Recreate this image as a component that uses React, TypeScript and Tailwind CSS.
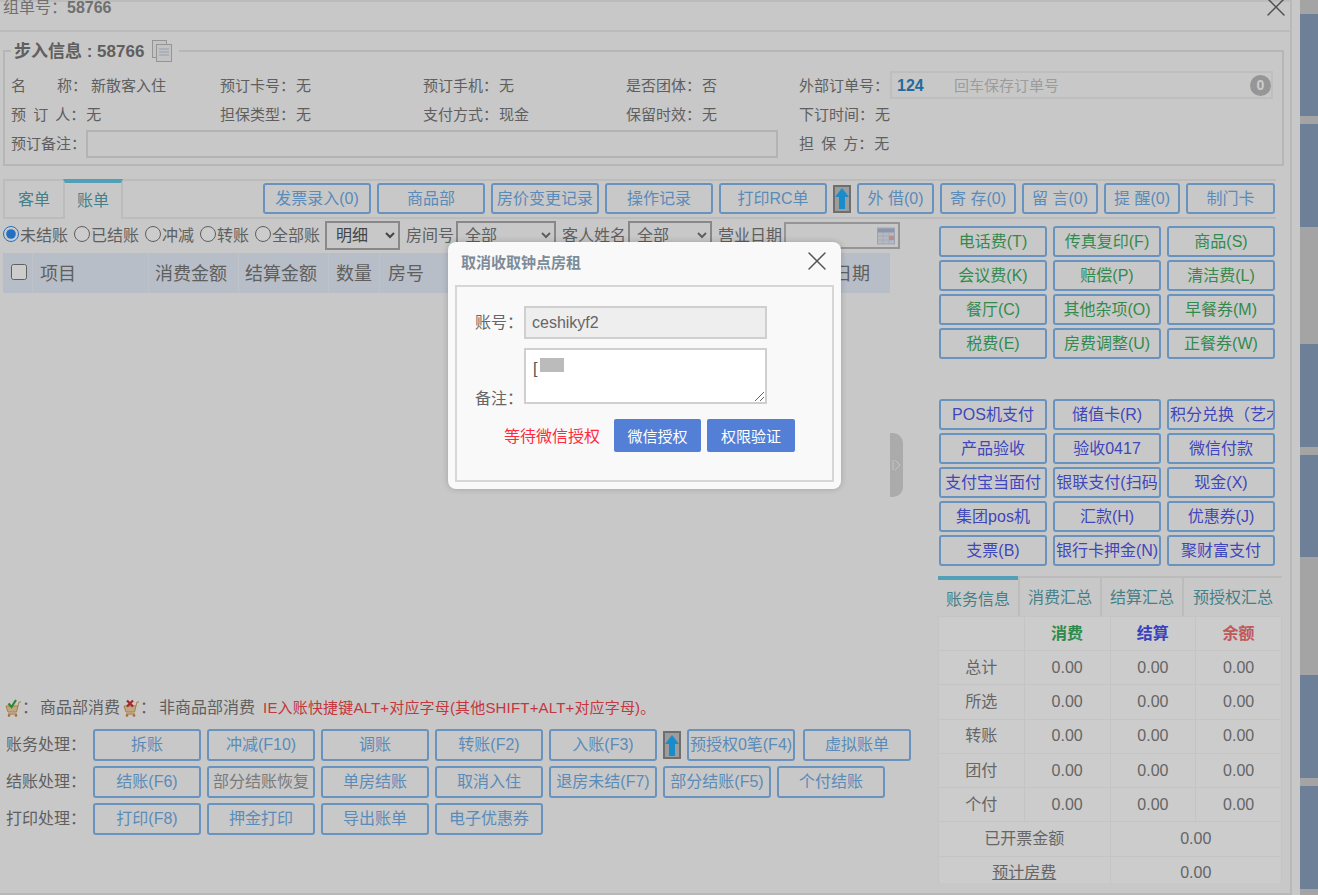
import { X } from "lucide-react";

const topBtns = [
  { t: "发票录入(0)", w: "w-[108px]" },
  { t: "商品部", w: "w-[108px]" },
  { t: "房价变更记录", w: "w-[108px]" },
  { t: "操作记录", w: "w-[108px]" },
  { t: "打印RC单", w: "w-[108px]" },
];
const topBtns2 = [
  { t: "外 借(0)", w: "w-[77px]" },
  { t: "寄 存(0)", w: "w-[76px]" },
  { t: "留 言(0)", w: "w-[76px]" },
  { t: "提 醒(0)", w: "w-[76px]" },
  { t: "制门卡", w: "w-[89px]" },
];
const greenBtns = ["电话费(T)", "传真复印(F)", "商品(S)", "会议费(K)", "赔偿(P)", "清洁费(L)", "餐厅(C)", "其他杂项(O)", "早餐券(M)", "税费(E)", "房费调整(U)", "正餐券(W)"];
const payBtns = ["POS机支付", "储值卡(R)", "积分兑换（艺术", "产品验收", "验收0417", "微信付款", "支付宝当面付", "银联支付(扫码", "现金(X)", "集团pos机", "汇款(H)", "优惠券(J)", "支票(B)", "银行卡押金(N)", "聚财富支付"];
const summary = ["总计", "所选", "转账", "团付", "个付"];

function Btn({ label, className, start }: { label: string; className?: string; start?: boolean }) {
  return (
    <button
      type="button"
      className={`flex shrink-0 items-center overflow-hidden whitespace-nowrap rounded-[3px] border-2 border-[#82b8ee] bg-[#fbfbfb] text-base ${start ? "justify-start pl-[1px]" : "justify-center"} ${className ?? ""}`}
    >
      {label}
    </button>
  );
}

function ArrowUp() {
  return (
    <span className="flex h-[28px] w-[18px] shrink-0 items-center justify-center self-center border-2 border-[#8a8a8a] bg-[#c4c4c4]">
      <svg width="14" height="23" viewBox="0 0 14 23">
        <path d="M7 1 L14 10 L10 10 L10 22 L4 22 L4 10 L0 10 Z" fill="#20b0ff" />
      </svg>
    </span>
  );
}

function Cart({ ok }: { ok: boolean }) {
  return (
    <svg width="17" height="18" viewBox="0 0 17 18" className="shrink-0">
      <path d="M1 7 H13 L11.5 13 H3 Z" fill="#f2d3a4" stroke="#d89d50" strokeWidth="1" />
      <path d="M3 15 H12" stroke="#d89d50" strokeWidth="1.2" />
      <circle cx="4" cy="16.5" r="1.3" fill="#c88a3c" />
      <circle cx="11" cy="16.5" r="1.3" fill="#c88a3c" />
      <path d="M13 7 L14 3 H16" stroke="#d89d50" strokeWidth="1" fill="none" />
      {ok ? (
        <path d="M3.5 4.5 L6.5 8 L11 1" stroke="#3aa845" strokeWidth="2.2" fill="none" />
      ) : (
        <path d="M4 1.5 L10 7.5 M10 1.5 L4 7.5" stroke="#c8323c" strokeWidth="2.2" fill="none" />
      )}
    </svg>
  );
}

function Info({ label, value }: { label: string; value: string }) {
  return (
    <div className="flex h-[29px] items-center whitespace-pre">
      <span className="[word-spacing:3px]">{label}</span>：<span className="ml-px">{value}</span>
    </div>
  );
}

function Radio({ label, checked }: { label: string; checked?: boolean }) {
  return (
    <label className="mr-[6px] flex items-center text-base">
      <input type="radio" name="acct" defaultChecked={checked} className="mb-[3px] h-4 w-4 accent-[#2d8cf0]" />
      <span className="ml-px">{label}</span>
    </label>
  );
}

export default function App() {
  return (
    <div className="relative flex h-[895px] w-[1318px] overflow-hidden bg-[#fbfbfb] text-[15px] text-[#777] [font-family:'Liberation_Sans','Noto_Sans_CJK_SC',sans-serif]">
      <div className="flex w-[1292px] shrink-0 flex-col border-r-2 border-b-2 border-r-[#e8e8e8] border-b-[#e8e8e8]">
        <header className="relative h-[32px] shrink-0 border-t-2 border-b-2 border-[#ececec] pl-[3px]">
          <div className="-mt-[3px] text-base leading-[18px] text-[#8c8c8c]">
            组单号：<span className="font-bold">58766</span>
          </div>
          <X className="absolute -right-[2px] -top-[11px] h-[32px] w-[32px] text-[#666]" strokeWidth={1.1} />
        </header>

        <fieldset className="ml-[3px] mr-[6px] mt-[7px] border-2 border-[#e4e4e4] pb-[5px] pl-[6px] pr-[9px]">
          <legend className="-mt-[1px] flex h-[24px] items-center pl-[3px] pr-[4px] text-[17px] font-bold leading-none">
            步入信息 : 58766
            <svg width="24" height="24" viewBox="0 0 24 24" className="ml-[7px]" fill="#f4f4f4" stroke="#bbb">
              <rect x="1.5" y="1.5" width="14" height="17" />
              <rect x="5.5" y="5.5" width="15" height="17" />
              <path d="M8 10 H18 M8 13 H18 M8 16 H18" stroke="#bcc4d8" />
            </svg>
          </legend>
          <div className="mt-[9px] grid grid-cols-[209px_203px_203px_173px_1fr]">
            <div className="flex h-[29px] items-center whitespace-pre">
              <span className="w-[46px]">名</span>称：<span className="ml-[4px]">新散客入住</span>
            </div>
            <Info label="预订卡号" value="无" />
            <Info label="预订手机" value="无" />
            <Info label="是否团体" value="否" />
            <div className="flex h-[29px] items-center whitespace-pre">
              外部订单号：
              <div className="-mt-[3px] ml-[1px] flex h-[28px] flex-1 items-center border-2 border-[#eeeeee] bg-[#fbfbfb] pl-[5px]">
                <span className="w-[57px] pt-[2px] text-base font-bold text-[#2c86c6]">124</span>
                <span className="pt-[2px] text-[#c4c4c4]">回车保存订单号</span>
                <span className="ml-auto flex h-[21px] w-[21px] items-center justify-center rounded-full bg-[#bcbcbc] text-sm font-bold text-white">0</span>
              </div>
            </div>
            <Info label="预 订 人" value="无" />
            <Info label="担保类型" value="无" />
            <Info label="支付方式" value="现金" />
            <Info label="保留时效" value="无" />
            <Info label="下订时间" value="无" />
            <div className="col-span-4 flex h-[29px] items-center whitespace-pre">
              预订备注：
              <input className="-mt-[2px] h-[28px] w-[692px] border-2 border-[#e0e0e0] bg-[#fbfbfb]" />
            </div>
            <Info label="担 保 方" value="无" />
          </div>
        </fieldset>

        <div className="ml-[3px] mr-[14px] mt-[13px] flex h-[40px] shrink-0 items-start border-y-2 border-[#ececec]">
          <div className="flex h-[38px] w-[60px] items-center justify-center border-l-2 border-[#ececec] text-base text-[#56a0aa]">客单</div>
          <div className="-mt-[2px] flex h-[40px] w-[60px] items-center justify-center border-x-2 border-t-4 border-x-[#ececec] border-t-[#66c8e6] bg-[#fbfbfb] text-base text-[#56a0aa]">账单</div>
          <div className="ml-[140px] mt-[2px] flex gap-[6px] text-[#72aee8]">
            {topBtns.map((b) => (
              <Btn key={b.t} label={b.t} className={`h-[31px] ${b.w}`} />
            ))}
            <ArrowUp />
            {topBtns2.map((b) => (
              <Btn key={b.t} label={b.t} className={`h-[31px] ${b.w}`} />
            ))}
          </div>
        </div>

        <div className="flex min-h-0 flex-1">
          <div className="flex w-[939px] shrink-0 flex-col pl-[3px]">
            <div className="mt-[2px] flex h-[29px] items-center text-base">
              <Radio label="未结账" checked />
              <Radio label="已结账" />
              <Radio label="冲减" />
              <Radio label="转账" />
              <Radio label="全部账" />
              <select className="-ml-[1px] h-[29px] w-[75px] border-2 border-[#aaa] bg-[#fbfbfb] pl-[5px] text-base text-[#555]">
                <option>明细</option>
              </select>
              <span className="ml-[6px] w-[50px] overflow-hidden whitespace-nowrap">房间号</span>
              <select className="h-[29px] w-[100px] border-2 border-[#aaa] bg-[#fbfbfb] pl-[3px] text-base">
                <option>全部</option>
              </select>
              <span className="ml-[6px] w-[66px] overflow-hidden whitespace-nowrap">客人姓名</span>
              <select className="h-[29px] w-[84px] border-2 border-[#aaa] bg-[#fbfbfb] pl-[3px] text-base">
                <option>全部</option>
              </select>
              <span className="ml-[6px] w-[66px] overflow-hidden whitespace-nowrap">营业日期</span>
              <div className="flex h-[27px] w-[116px] items-center justify-end border-2 border-[#bbb] pr-[3px]">
                <svg width="18" height="18" viewBox="0 0 18 18">
                  <rect x="0.5" y="1" width="17" height="16" fill="#e4e8f2" stroke="#c4cde0" />
                  <rect x="1" y="1.5" width="16" height="4" fill="#aebcd8" />
                  <path d="M1 9 H17 M1 13 H17 M6 6 V17 M12 6 V17" stroke="#d0d6e6" />
                  <rect x="12" y="9" width="5" height="4" fill="#eeb0a0" />
                </svg>
              </div>
            </div>
            <div className="mt-[3px] flex h-[40px] w-[887px] items-center bg-[#e7eefa] text-[18px] text-[#777]">
              <div className="flex h-full w-[30px] items-center justify-center border-r border-[#eef3fc] pl-[2px]">
                <input type="checkbox" className="mb-[3px] h-[16px] w-[16px]" />
              </div>
              <div className="flex h-full w-[116px] items-center border-r border-[#eef3fc] pl-[7px] pt-[2px]">项目</div>
              <div className="flex h-full w-[90px] items-center border-r border-[#eef3fc] pl-[6px] pt-[2px]">消费金额</div>
              <div className="flex h-full w-[90px] items-center border-r border-[#eef3fc] pl-[6px] pt-[2px]">结算金额</div>
              <div className="flex h-full w-[51px] items-center justify-center border-r border-[#eef3fc] pt-[2px]">数量</div>
              <div className="flex h-full items-center pl-[8px] pt-[2px]">房号</div>
              <div className="ml-auto pr-[20px] pt-[2px]">日期</div>
            </div>

            <div className="mt-auto flex h-[20px] items-center whitespace-nowrap text-base">
              <span className="ml-[2px]"><Cart ok /></span>
              <span>：</span>
              <span className="ml-[2px]">商品部消费</span>
              <span className="ml-[3px]"><Cart ok={false} /></span>
              <span>：</span>
              <span className="ml-[3px]">非商品部消费</span>
              <span className="ml-[8px] text-[15px] tracking-[0.17px] text-[#f5454f]">IE入账快捷键ALT+对应字母(其他SHIFT+ALT+对应字母)。</span>
            </div>
            <div className="mb-[58px] mt-[11px] flex flex-col gap-[5px] text-[#72aee8]">
              <div className="flex h-[32px] items-center gap-[6px]">
                <span className="ml-[3px] w-[81px] text-base text-[#777]">账务处理：</span>
                <Btn label="拆账" className="h-[32px] w-[108px]" />
                <Btn label="冲减(F10)" className="h-[32px] w-[108px]" />
                <Btn label="调账" className="h-[32px] w-[108px]" />
                <Btn label="转账(F2)" className="h-[32px] w-[108px]" />
                <Btn label="入账(F3)" className="h-[32px] w-[108px]" />
                <ArrowUp />
                <Btn label="预授权0笔(F4)" className="h-[32px] w-[108px]" />
                <Btn label="虚拟账单" className="ml-[2px] h-[32px] w-[108px]" />
              </div>
              <div className="flex h-[32px] items-center gap-[6px]">
                <span className="ml-[3px] w-[81px] text-base text-[#777]">结账处理：</span>
                <Btn label="结账(F6)" className="h-[32px] w-[108px]" />
                <Btn label="部分结账恢复" className="h-[32px] w-[108px] text-[#999]" />
                <Btn label="单房结账" className="h-[32px] w-[108px]" />
                <Btn label="取消入住" className="h-[32px] w-[108px]" />
                <Btn label="退房未结(F7)" className="h-[32px] w-[108px]" />
                <Btn label="部分结账(F5)" className="h-[32px] w-[108px]" />
                <Btn label="个付结账" className="h-[32px] w-[108px]" />
              </div>
              <div className="flex h-[32px] items-center gap-[6px]">
                <span className="ml-[3px] w-[81px] text-base text-[#777]">打印处理：</span>
                <Btn label="打印(F8)" className="h-[32px] w-[108px]" />
                <Btn label="押金打印" className="h-[32px] w-[108px]" />
                <Btn label="导出账单" className="h-[32px] w-[108px]" />
                <Btn label="电子优惠券" className="h-[32px] w-[108px]" />
              </div>
            </div>
          </div>

          <div className="flex min-w-0 flex-1 flex-col">
            <div className="mt-[7px] grid grid-cols-[108px_108px_108px] gap-x-[6px] gap-y-[3px] text-[#3fae60]">
              {greenBtns.map((t) => (
                <Btn key={t} label={t} className="h-[31px] w-[108px]" />
              ))}
            </div>
            <div className="mt-[40px] grid grid-cols-[108px_108px_108px] gap-x-[6px] gap-y-[3px] text-[#5058ec]">
              {payBtns.map((t) => (
                <Btn key={t} label={t} start={t.startsWith("积分")} className="h-[31px] w-[108px]" />
              ))}
            </div>
            <div className="-ml-px mt-[10px] flex h-[40px] w-[344px] border-t-2 border-[#ececec] text-base text-[#56a0aa]">
              <div className="-mt-[2px] flex h-[40px] w-[80px] items-center justify-center border-t-4 border-[#66c8e6] pt-[4px]">账务信息</div>
              <div className="flex h-[38px] w-[82px] items-center justify-center border-l-2 border-[#ececec] pt-[2px]">消费汇总</div>
              <div className="flex h-[38px] w-[82px] items-center justify-center border-l-2 border-[#ececec] pt-[2px]">结算汇总</div>
              <div className="flex h-[38px] flex-1 items-center justify-center whitespace-nowrap border-l-2 border-[#ececec] pt-[2px]">预授权汇总</div>
            </div>
            <div className="-ml-px h-[267px] w-[344px] overflow-hidden">
              <table className="w-full table-fixed border-collapse bg-white text-base text-[#808080]">
                <thead>
                  <tr className="h-[34px] font-bold">
                    <th className="border border-[#f6f6f6]" />
                    <th className="border border-[#f6f6f6] text-[#3aad5d]">消费</th>
                    <th className="border border-[#f6f6f6] text-[#4952f0]">结算</th>
                    <th className="border border-[#f6f6f6] text-[#f07070]">余额</th>
                  </tr>
                </thead>
                <tbody className="text-center">
                  {summary.map((s) => (
                    <tr key={s} className="h-[34.3px]">
                      <td className="border border-[#f6f6f6]">{s}</td>
                      <td className="border border-[#f6f6f6]">0.00</td>
                      <td className="border border-[#f6f6f6]">0.00</td>
                      <td className="border border-[#f6f6f6]">0.00</td>
                    </tr>
                  ))}
                  <tr className="h-[34.3px]">
                    <td colSpan={2} className="border border-[#f6f6f6]">已开票金额</td>
                    <td colSpan={2} className="border border-[#f6f6f6]">0.00</td>
                  </tr>
                  <tr className="h-[34.3px]">
                    <td colSpan={2} className="border border-[#f6f6f6] underline">预计房费</td>
                    <td colSpan={2} className="border border-[#f6f6f6]">0.00</td>
                  </tr>
                </tbody>
              </table>
            </div>
          </div>
        </div>
      </div>

      <div className="flex-1 pl-[8px]">
        <div className="flex h-full flex-col bg-[#cecece]">
          <div className="mt-[14px] h-[102px] bg-[#8aa0bf]" />
          <div className="mt-[8px] h-[103px] bg-[#8aa0bf]" />
          <div className="mt-[117px] h-[103px] bg-[#8aa0bf]" />
          <div className="mt-[8px] h-[102px] bg-[#8aa0bf]" />
          <div className="mt-[118px] h-[103px] bg-[#8aa0bf]" />
          <div className="mt-[8px] h-[103px] bg-[#8aa0bf]" />
        </div>
      </div>

      <div className="absolute left-[890px] top-[433px] flex h-[64px] w-[13px] items-center justify-center rounded-r-[10px] bg-[#d6d6d6]">
        <svg width="9" height="12" viewBox="0 0 9 12" fill="none" stroke="#f4f4f4" strokeWidth="1">
          <path d="M1 1 V11 M3 1 L8 6 L3 11" />
        </svg>
      </div>

      <div className="absolute inset-0 bg-black/20" />

      <div className="absolute left-[448px] top-[242px] flex h-[247px] w-[393px] flex-col rounded-lg bg-[#f9f9f9] px-[7px] shadow-[0_0_6px_rgba(0,0,0,0.2)]">
        <div className="relative flex h-[43px] shrink-0 items-center pl-[6px] text-[15px] font-bold text-[#7d8c99]">
          取消收取钟点房租
          <X className="absolute right-[1px] top-[3px] h-[32px] w-[32px] text-[#555]" strokeWidth={1.1} />
        </div>
        <div className="h-[197px] border-2 border-[#d6d6d6] pl-[18px]">
          <div className="mt-[19px] flex items-center text-base text-[#666]">
            <span className="w-[49px]">账号：</span>
            <div className="flex h-[33px] w-[243px] items-center border-2 border-[#cfcfcf] bg-[#eeeeee] pl-[6px] text-[#666]">ceshikyf2</div>
          </div>
          <div className="mt-[9px] flex items-end text-base text-[#666]">
            <span className="-mb-[5px] w-[49px] leading-[20px]">备注：</span>
            <div className="relative h-[56px] w-[243px] border-2 border-[#cfcfcf] bg-white">
              <span className="absolute left-[7px] top-[7px] text-[#555]">[</span>
              <span className="absolute left-[14px] top-[8px] h-[14px] w-[24px] bg-[#bbbbbb]" />
              <svg width="12" height="12" viewBox="0 0 12 12" className="absolute bottom-0 right-0" stroke="#666" fill="none">
                <path d="M2 11 L11 2 M7 11 L11 7" />
              </svg>
            </div>
          </div>
          <div className="mt-[15px] flex items-center">
            <span className="ml-[29px] pt-[3px] text-base text-[#ff2a3c]">等待微信授权</span>
            <button type="button" className="ml-[14px] h-[33px] w-[87px] rounded-[2px] bg-[#537fd6] pt-[3px] text-[15px] text-white">微信授权</button>
            <button type="button" className="ml-[6px] h-[33px] w-[88px] rounded-[2px] bg-[#537fd6] pt-[3px] text-[15px] text-white">权限验证</button>
          </div>
        </div>
      </div>
    </div>
  );
}
